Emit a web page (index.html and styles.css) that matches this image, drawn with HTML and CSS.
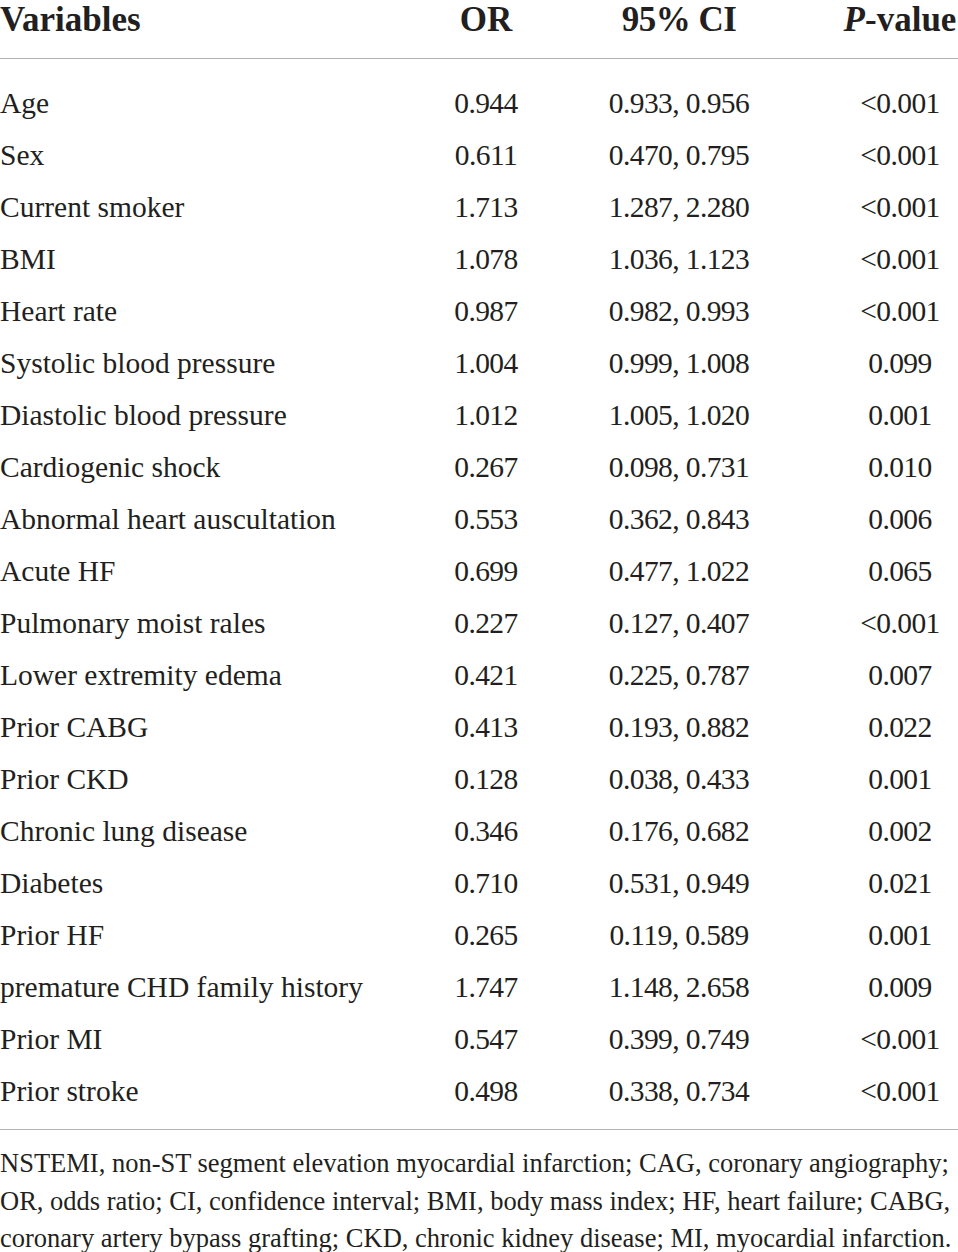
FILE: index.html
```html
<!DOCTYPE html>
<html lang="en">
<head>
  <meta charset="UTF-8" />
  <title>Table – Logistic regression</title>
  <link rel="stylesheet" href="styles.css">
</head>
<body>

<table class="data-table">
  <thead>
    <tr>
      <th class="col-var">Variables</th>
      <th class="col-or">OR</th>
      <th class="col-ci">95% CI</th>
      <th class="col-p"><i>P</i>-value</th>
    </tr>
  </thead>
  <tbody>
    <tr><td>Age</td><td>0.944</td><td>0.933, 0.956</td><td>&lt;0.001</td></tr>
    <tr><td>Sex</td><td>0.611</td><td>0.470, 0.795</td><td>&lt;0.001</td></tr>
    <tr><td>Current smoker</td><td>1.713</td><td>1.287, 2.280</td><td>&lt;0.001</td></tr>
    <tr><td>BMI</td><td>1.078</td><td>1.036, 1.123</td><td>&lt;0.001</td></tr>
    <tr><td>Heart rate</td><td>0.987</td><td>0.982, 0.993</td><td>&lt;0.001</td></tr>
    <tr><td>Systolic blood pressure</td><td>1.004</td><td>0.999, 1.008</td><td>0.099</td></tr>
    <tr><td>Diastolic blood pressure</td><td>1.012</td><td>1.005, 1.020</td><td>0.001</td></tr>
    <tr><td>Cardiogenic shock</td><td>0.267</td><td>0.098, 0.731</td><td>0.010</td></tr>
    <tr><td>Abnormal heart auscultation</td><td>0.553</td><td>0.362, 0.843</td><td>0.006</td></tr>
    <tr><td>Acute HF</td><td>0.699</td><td>0.477, 1.022</td><td>0.065</td></tr>
    <tr><td>Pulmonary moist rales</td><td>0.227</td><td>0.127, 0.407</td><td>&lt;0.001</td></tr>
    <tr><td>Lower extremity edema</td><td>0.421</td><td>0.225, 0.787</td><td>0.007</td></tr>
    <tr><td>Prior CABG</td><td>0.413</td><td>0.193, 0.882</td><td>0.022</td></tr>
    <tr><td>Prior CKD</td><td>0.128</td><td>0.038, 0.433</td><td>0.001</td></tr>
    <tr><td>Chronic lung disease</td><td>0.346</td><td>0.176, 0.682</td><td>0.002</td></tr>
    <tr><td>Diabetes</td><td>0.710</td><td>0.531, 0.949</td><td>0.021</td></tr>
    <tr><td>Prior HF</td><td>0.265</td><td>0.119, 0.589</td><td>0.001</td></tr>
    <tr><td>premature CHD family history</td><td>1.747</td><td>1.148, 2.658</td><td>0.009</td></tr>
    <tr><td>Prior MI</td><td>0.547</td><td>0.399, 0.749</td><td>&lt;0.001</td></tr>
    <tr><td>Prior stroke</td><td>0.498</td><td>0.338, 0.734</td><td>&lt;0.001</td></tr>
  </tbody>
</table>

<p class="footnote">
  NSTEMI, non-ST segment elevation myocardial infarction; CAG, coronary angiography;<br>
  OR, odds ratio; CI, confidence interval; BMI, body mass index; HF, heart failure; CABG,<br>
  coronary artery bypass grafting; CKD, chronic kidney disease; MI, myocardial infarction.
</p>

</body>
</html>
```

FILE: styles.css
```css
:root {
  --text: #231f20;
  --rule: #b3b3b3;
}

body {
  margin: 0;
  background: #fff;
  color: var(--text);
  font-family: "Liberation Serif", "Times New Roman", serif;
}

.data-table {
  width: 958px;
  border-collapse: collapse;
  table-layout: fixed;
}

.data-table th {
  font-size: 35px;
  font-weight: bold;
  line-height: 40px;
  padding: 0 0 18px 0;
  border-bottom: 1px solid var(--rule);
  text-align: center;
  white-space: nowrap;
}

.data-table .col-var { width: 400px; text-align: left; }
.data-table .col-or { width: 172px; }
.data-table .col-ci { width: 214px; letter-spacing: -0.5px; }
.data-table .col-p { width: 116px; padding-left: 56px; }

.data-table td {
  font-size: 29.5px;
  line-height: 52px;
  padding: 0;
  text-align: center;
  white-space: nowrap;
  letter-spacing: -0.6px;
}

.data-table td:first-child {
  text-align: left;
  letter-spacing: 0;
}

.data-table td:last-child {
  padding-left: 56px;
}

.data-table tbody tr:first-child td {
  padding-top: 18px;
}

.data-table tbody tr:last-child td {
  padding-bottom: 12px;
  border-bottom: 1px solid var(--rule);
}

.footnote {
  margin: 15px 0 0;
  font-size: 26.5px;
  line-height: 37.5px;
  white-space: nowrap;
}
```
